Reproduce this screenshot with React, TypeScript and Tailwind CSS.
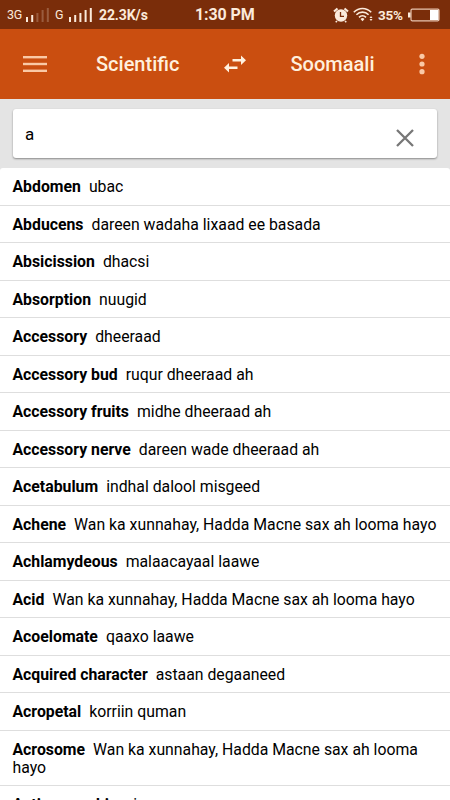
const entries = [
  { term: 'Abdomen', meaning: 'ubac' },
  { term: 'Abducens', meaning: 'dareen wadaha lixaad ee basada' },
  { term: 'Absicission', meaning: 'dhacsi' },
  { term: 'Absorption', meaning: 'nuugid' },
  { term: 'Accessory', meaning: 'dheeraad' },
  { term: 'Accessory bud', meaning: 'ruqur dheeraad ah' },
  { term: 'Accessory fruits', meaning: 'midhe dheeraad ah' },
  { term: 'Accessory nerve', meaning: 'dareen wade dheeraad ah' },
  { term: 'Acetabulum', meaning: 'indhal dalool misgeed' },
  { term: 'Achene', meaning: 'Wan ka xunnahay, Hadda Macne sax ah looma hayo' },
  { term: 'Achlamydeous', meaning: 'malaacayaal laawe' },
  { term: 'Acid', meaning: 'Wan ka xunnahay, Hadda Macne sax ah looma hayo' },
  { term: 'Acoelomate', meaning: 'qaaxo laawe' },
  { term: 'Acquired character', meaning: 'astaan degaaneed' },
  { term: 'Acropetal', meaning: 'korriin quman' },
  { term: 'Acrosome', meaning: 'Wan ka xunnahay, Hadda Macne sax ah looma hayo' },
  { term: 'Actinomorphic', meaning: 'siman' },
];

function Signal({ active }: { active: number }) {
  return (
    <svg width="23" height="15" viewBox="0 0 23 15" fill="#fbeadb">
      {[5, 7, 9, 12, 14].map((h, i) => (
        <rect key={i} x={i * 5.2} y={15 - h} width="2" height={h} opacity={i < active ? 1 : 0.25} />
      ))}
    </svg>
  );
}

function StatusBar() {
  return (
    <div className="relative flex h-[29px] items-center bg-[#7a2d0a] text-[#fbeadb]">
      <span className="ml-[7px] mt-[2px] w-[19px] text-[12.500px] leading-none tracking-[-0.2px]">3G</span>
      <Signal active={2} />
      <span className="ml-[6px] mt-[2px] w-[14px] text-[12.500px] leading-none">G</span>
      <Signal active={5} />
      <span className="ml-[7px] w-[52px] pt-[2px] text-[14px] font-bold tracking-[-0.1px]">22.3K/s</span>
      <span className="absolute top-[3px] left-[195px] text-[16px] leading-[24px] font-bold tracking-[-0.1px]">1:30 PM</span>
      <div className="ml-auto mr-[10px] flex items-center">
        <svg width="16" height="16" viewBox="0 0 16 16">
          <circle cx="8" cy="8.5" r="6.2" fill="#fbeadb" />
          <path d="M1 4.5 4.5 1.5M15 4.5 11.5 1.5" stroke="#fbeadb" strokeWidth="2.2" />
          <path d="M4 14l-1.3 1.3M12 14l1.3 1.3" stroke="#fbeadb" strokeWidth="1.5" />
          <path d="M7.5 5v4.300h3.500" fill="none" stroke="#7a2d0a" strokeWidth="1.3" />
        </svg>
        <svg className="ml-[4px]" width="21" height="15" viewBox="0 0 21 15">
          <g fill="none" stroke="#fbeadb" strokeWidth="1.6">
            <path d="M.8 5.2C5.8.2 13.2.2 18.2 5.2" />
            <path d="M3.4 7.8c3.5-3.6 8.7-3.6 12.2 0" />
            <path d="M6 10.4c2-2 5-2 7 0" />
          </g>
          <path d="M7.5 12a3 3 0 0 1 4 0l-2 2.2z" fill="#fbeadb" />
          <path d="M18 9l1.500 2h-3zM18 14l1.500-2h-3z" fill="#fbeadb" />
        </svg>
        <span className="ml-[4px] w-[30px] pt-[1px] text-[13.500px] font-bold tracking-[-0.2px]">35%</span>
        <svg width="32" height="14" viewBox="0 0 32 14">
          <rect x="3" y="1.2" width="28" height="11.6" rx="1.2" fill="none" stroke="#e8c5b0" strokeWidth="1.2" />
          <rect x="0" y="4.5" width="2.5" height="5" fill="#fbeadb" />
          <rect x="22" y="2" width="8.5" height="10" fill="#fff" />
        </svg>
      </div>
    </div>
  );
}

function Toolbar() {
  return (
    <header className="flex h-[70px] items-center bg-[#ca4e10] text-[#fff0de]">
      <svg className="ml-[23px]" width="24" height="18" viewBox="0 0 24 18" fill="#fac9a6">
        <rect y="1" width="24" height="2.4" />
        <rect y="7.8" width="24" height="2.4" />
        <rect y="14.6" width="24" height="2.4" />
      </svg>
      <span className="ml-[49px] w-[128px] text-[20px] font-medium">Scientific</span>
      <svg width="22" height="18" viewBox="0 0 22 18" fill="#fff0de">
        <path d="M8.500 4H17V.5L22 5.200 17 10V6.400H8.500z" />
        <path d="M13.500 11.600H5V8L0 12.800l5 4.700V14h8.500z" />
      </svg>
      <span className="ml-[44.500px] w-[128.500px] text-[20px] font-medium">Soomaali</span>
      <svg width="6" height="22" viewBox="0 0 6 22" fill="#fac9a6">
        <circle cx="3" cy="3.300" r="2.600" />
        <circle cx="3" cy="11" r="2.600" />
        <circle cx="3" cy="18.700" r="2.600" />
      </svg>
    </header>
  );
}

export default function App() {
  return (
    <div className="flex h-[800px] w-[450px] flex-col overflow-hidden bg-[#e4e4e4] font-['Roboto',sans-serif] text-black">
      <StatusBar />
      <Toolbar />

      {/* Search */}
      <div className="h-[69px] shrink-0 px-[13px] pt-[10px]">
        <div className="flex h-[49px] items-center justify-between rounded-[3px] bg-white pr-[23px] pl-[12px] shadow-[0_1px_2px_rgba(0,0,0,0.4)]">
          <span className="pt-[2px] text-[17px]">a</span>
          <svg className="mt-[8px]" width="18" height="18" viewBox="0 0 18 18">
            <path d="M1 1l16 16M17 1 1 17" stroke="#777" strokeWidth="2.300" />
          </svg>
        </div>
      </div>

      {/* Results */}
      <ul className="min-h-0 flex-1 overflow-hidden rounded-t-[3px] bg-white">
        {entries.map((entry) => (
          <li
            key={entry.term}
            className="border-b border-[#dedede] pt-[10.250px] pr-[10px] pb-[8.250px] pl-[12.500px] text-[15.800px] leading-[18px]"
          >
            <b className="mr-[8px] font-bold">{entry.term}</b>
            {entry.meaning}
          </li>
        ))}
      </ul>
    </div>
  );
}
